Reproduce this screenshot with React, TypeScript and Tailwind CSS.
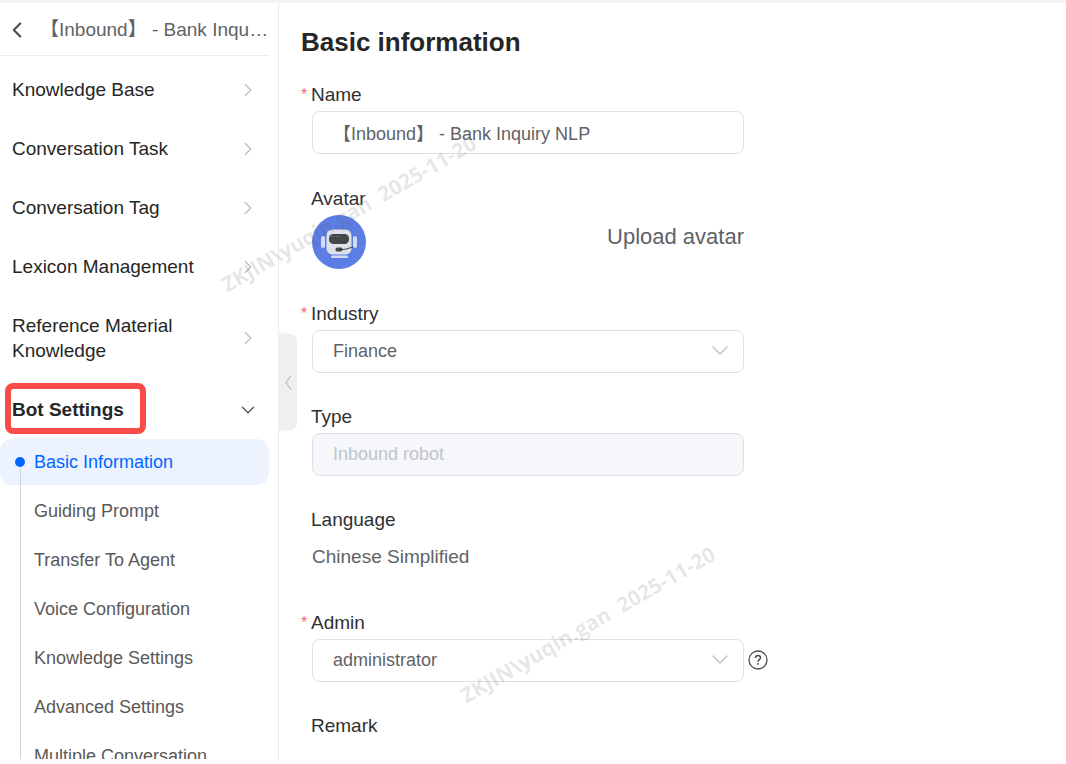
import type { ReactNode } from "react";
import { ChevronDown, ChevronLeft, ChevronRight } from "lucide-react";
import clsx from "clsx";

const BOT_NAME = "【Inbound】 - Bank Inquiry NLP";

const MENU = [
  "Knowledge Base",
  "Conversation Task",
  "Conversation Tag",
  "Lexicon Management",
  "Reference Material Knowledge",
];

const BOT_SETTINGS = [
  "Basic Information",
  "Guiding Prompt",
  "Transfer To Agent",
  "Voice Configuration",
  "Knowledge Settings",
  "Advanced Settings",
  "Multiple Conversation",
];

const CONTROL =
  "block h-[43px] w-full appearance-none rounded-lg border border-[#dcdfe6] px-5 text-[18px] text-[#606266] outline-none";

function RobotAvatar() {
  return (
    <svg viewBox="0 0 54 54" className="size-[54px]" aria-hidden="true">
      <circle cx="27" cy="27" r="27" fill="#5b7de4" />
      <rect x="9" y="21" width="4" height="12" rx="2" fill="#d3dbf3" />
      <rect x="41" y="21" width="4" height="12" rx="2" fill="#d3dbf3" />
      <rect x="14.5" y="14.5" width="25" height="25" rx="6" fill="#dee1ea" />
      <rect x="17" y="19" width="20" height="10" rx="4.5" fill="#454648" />
      <path d="M19 21.5h3M23.5 21.5h4" stroke="#6b6c6e" strokeWidth="1" />
      <path d="M29 34.5c5 .2 7-1.2 12-2.5" fill="none" stroke="#454648" strokeWidth="1" />
      <rect x="23.5" y="32.5" width="7" height="4" rx="1.8" fill="#454648" />
      <rect x="19" y="40.5" width="17" height="2.5" rx="1" fill="#d3dbf3" />
    </svg>
  );
}

function HelpIcon() {
  return (
    <svg viewBox="0 0 20 20" className="size-5" fill="none" stroke="#4d4d4d" aria-hidden="true">
      <circle cx="10" cy="10" r="9" strokeWidth="1.3" />
      <path d="M7.5 8c0-1.5 1.1-2.5 2.5-2.5s2.5.9 2.5 2.3c0 1.7-2.5 1.9-2.5 3.9" strokeWidth="1.5" />
      <path d="M10 13v1.7" strokeWidth="1.6" />
    </svg>
  );
}

function Watermark({ className }: { className: string }) {
  return (
    <div
      aria-hidden="true"
      className={clsx(
        "pointer-events-none absolute -translate-1/2 -rotate-30 font-['Open_Sans',sans-serif] text-[21px] font-bold whitespace-pre text-[#606060]/16 select-none",
        className,
      )}
    >
      {"ZKJIN\\yuqin.gan  2025-11-20"}
    </div>
  );
}

interface FieldProps {
  label: string;
  id?: string;
  required?: boolean;
  className?: string;
  children?: ReactNode;
}

function Field({ label, id, required, className, children }: FieldProps) {
  const Label = id ? "label" : "div";
  return (
    <div className={clsx("flex flex-col gap-1", className)}>
      <Label htmlFor={id} className="flex text-[19px] leading-[25px] text-[#303133]">
        <span className="w-[10px] text-[16px] text-[#f56c6c]">{required && "*"}</span>
        {label}
      </Label>
      <div className="relative ml-[11px]">{children}</div>
    </div>
  );
}

function SelectBox({ id, value }: { id: string; value: string }) {
  return (
    <div className="relative">
      <select id={id} defaultValue={value} className={clsx(CONTROL, "bg-white")}>
        <option>{value}</option>
      </select>
      <svg
        viewBox="0 0 16 10"
        className="pointer-events-none absolute top-4 right-4 h-[10px] w-4"
        fill="none"
        stroke="#c0c4cc"
        strokeWidth="1.5"
        strokeLinecap="round"
        strokeLinejoin="round"
      >
        <path d="M1 1l7 7 7-7" />
      </svg>
    </div>
  );
}

function Sidebar() {
  return (
    <aside className="relative flex w-[279px] shrink-0 flex-col border-r border-[#ececec] pr-[9px] pb-[2px]">
      <header className="flex h-[53px] shrink-0 items-center border-b border-[#ececec] pt-[2px]">
        <button aria-label="Back" className="flex w-10 shrink-0 cursor-pointer pl-[4px]">
          <ChevronLeft className="size-[26px] text-[#4d4d4d]" strokeWidth={2} />
        </button>
        <h2 className="truncate text-[19px] text-[#606266]">{BOT_NAME}</h2>
      </header>

      <nav className="min-h-0 flex-1 overflow-hidden pt-1">
        {MENU.map((item) => (
          <button
            key={item}
            className="flex w-full cursor-pointer items-center justify-between py-[17px] pr-[10px] pl-3 text-left text-[19px] leading-[25px] text-[#262626]"
          >
            <span className="max-w-[190px]">{item}</span>
            <ChevronRight className="size-[22px] shrink-0 text-[#bfbfbf]" strokeWidth={1.5} />
          </button>
        ))}

        <div className="relative">
          <button
            aria-expanded="true"
            className="flex w-full cursor-pointer items-center justify-between py-[17px] pr-[10px] pl-3 text-left text-[19px] leading-[25px] font-bold text-[#262626]"
          >
            Bot Settings
            <ChevronDown className="size-[22px] shrink-0 text-[#595959]" strokeWidth={1.5} />
          </button>
          <div className="pointer-events-none absolute top-[3px] left-[5px] h-[51px] w-[141px] rounded-lg border-6 border-[#f94c4a]" />
        </div>

        <ul className="relative flex flex-col gap-[3px]">
          {BOT_SETTINGS.map((item, index) => (
            <li key={item}>
              <a
                href="#"
                className={clsx(
                  "flex h-[46px] items-center pl-[34px] text-[18px]",
                  index === 0 ? "rounded-xl bg-[#ecf3ff] text-[#0066ff]" : "text-[#595959]",
                )}
              >
                {item}
              </a>
            </li>
          ))}
          {/* tree line with the active dot on top */}
          <span className="absolute top-6 bottom-0 left-5 w-px bg-[#d0d3d8]" />
          <span className="absolute top-[18px] left-[15px] size-[10px] rounded-full bg-[#0066ff]" />
        </ul>
      </nav>
    </aside>
  );
}

export default function App() {
  return (
    <div className="relative flex h-screen flex-col overflow-hidden border-t-3 border-b-3 border-t-[#f4f4f5] border-b-[#fafafa] bg-white font-['Liberation_Sans','Noto_Sans_CJK_SC',sans-serif]">
      <div className="flex min-h-0 flex-1">
        <Sidebar />

        <main className="relative min-w-0 flex-1 overflow-hidden pt-[22px] pl-[22px]">
          <button
            aria-label="Collapse menu"
            className="absolute top-1/2 left-0 flex h-[97px] w-[18px] -translate-y-1/2 cursor-pointer items-center justify-center rounded-r-lg bg-[#efefef]"
          >
            <svg viewBox="0 0 8 16" className="h-4 w-2" fill="none" stroke="#c4c4c4" strokeWidth="1.3">
              <path d="M7 1L2 8l5 7" />
            </svg>
          </button>

          <h1 className="text-[26px] leading-[34px] font-bold text-[#262626]">Basic information</h1>

          <form className="mt-[23px] flex w-full max-w-[443px] flex-col gap-[31px]">
            <Field label="Name" id="name" required className="pb-[1px]">
              <input id="name" type="text" defaultValue={BOT_NAME} className={clsx(CONTROL, "pb-[2px]")} />
            </Field>

            <Field label="Avatar" className="pb-[1px]">
              <div className="flex items-center justify-between">
                <RobotAvatar />
                <button type="button" className="cursor-pointer pb-[10px] text-[22px] leading-[26px] text-[#606266]">
                  Upload avatar
                </button>
              </div>
            </Field>

            <Field label="Industry" id="industry" required>
              <SelectBox id="industry" value="Finance" />
            </Field>

            <Field label="Type" id="type">
              <input
                id="type"
                type="text"
                defaultValue="Inbound robot"
                disabled
                className={clsx(CONTROL, "bg-[#f5f7fa] text-[#c0c4cc]")}
              />
            </Field>

            <Field label="Language">
              <p className="flex h-[43px] items-center text-[19px] text-[#606266]">Chinese Simplified</p>
            </Field>

            <Field label="Admin" id="admin" required>
              <SelectBox id="admin" value="administrator" />
              <button type="button" aria-label="Help" className="absolute top-[11px] left-full ml-1 cursor-pointer">
                <HelpIcon />
              </button>
            </Field>

            <Field label="Remark" />
          </form>
        </main>
      </div>

      <Watermark className="top-[211px] left-[349px]" />
      <Watermark className="top-[622px] left-[588px]" />
    </div>
  );
}
